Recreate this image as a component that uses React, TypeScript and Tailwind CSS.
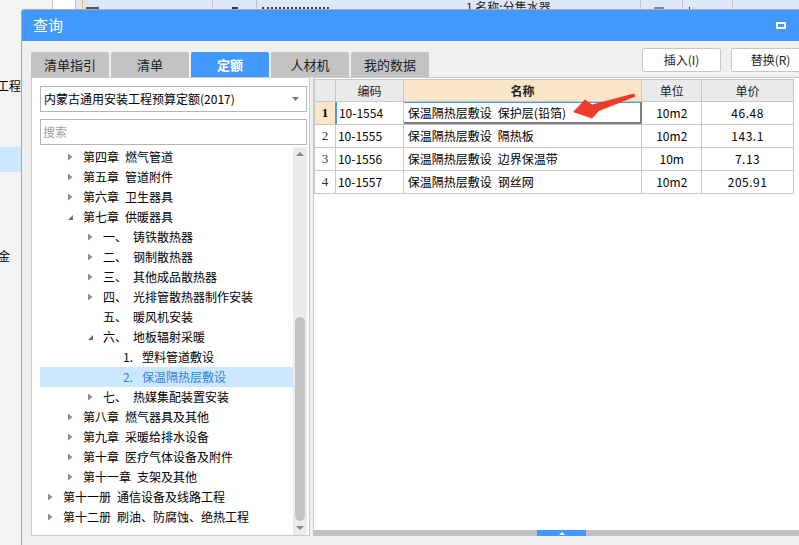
import React from "react";

type Node = { lv: number; a?: "r" | "d"; p: string; t: string; sel?: boolean };

const tree: Node[] = [
  { lv: 2, a: "r", p: "第四章", t: "燃气管道" },
  { lv: 2, a: "r", p: "第五章", t: "管道附件" },
  { lv: 2, a: "r", p: "第六章", t: "卫生器具" },
  { lv: 2, a: "d", p: "第七章", t: "供暖器具" },
  { lv: 3, a: "r", p: "一、", t: "铸铁散热器" },
  { lv: 3, a: "r", p: "二、", t: "钢制散热器" },
  { lv: 3, a: "r", p: "三、", t: "其他成品散热器" },
  { lv: 3, a: "r", p: "四、", t: "光排管散热器制作安装" },
  { lv: 3, p: "五、", t: "暖风机安装" },
  { lv: 3, a: "d", p: "六、", t: "地板辐射采暖" },
  { lv: 4, p: "1.", t: "塑料管道敷设" },
  { lv: 4, p: "2.", t: "保温隔热层敷设", sel: true },
  { lv: 3, a: "r", p: "七、", t: "热媒集配装置安装" },
  { lv: 2, a: "r", p: "第八章", t: "燃气器具及其他" },
  { lv: 2, a: "r", p: "第九章", t: "采暖给排水设备" },
  { lv: 2, a: "r", p: "第十章", t: "医疗气体设备及附件" },
  { lv: 2, a: "r", p: "第十一章", t: "支架及其他" },
  { lv: 1, a: "r", p: "第十一册", t: "通信设备及线路工程" },
  { lv: 1, a: "r", p: "第十二册", t: "刷油、防腐蚀、绝热工程" },
];

const rows = [
  ["10-1554", "保温隔热层敷设", "保护层(铅箔)", "10m2", "46.48"],
  ["10-1555", "保温隔热层敷设", "隔热板", "10m2", "143.1"],
  ["10-1556", "保温隔热层敷设", "边界保温带", "10m", "7.13"],
  ["10-1557", "保温隔热层敷设", "钢丝网", "10m2", "205.91"],
];

const tabs = ["清单指引", "清单", "定额", "人材机", "我的数据"];

function Arrow({ kind }: { kind?: "r" | "d" }) {
  if (kind === "r")
    return (
      <svg width="15" height="20" viewBox="0 0 15 20">
        <polygon points="0,6.5 4.5,10 0,13.5" fill="#8c8c8c" />
      </svg>
    );
  if (kind === "d")
    return (
      <svg width="15" height="20" viewBox="0 0 15 20">
        <polygon points="0,13 5,8 5,13" fill="#6e6e6e" />
      </svg>
    );
  return <span className="w-[15px]" />;
}

export default function App() {
  return (
    <div className="w-[799px] h-[545px] overflow-hidden bg-[#f3f3f3] flex font-['Noto_Sans_CJK_SC',sans-serif] text-[12px] text-black">
      {/* left edge of the window behind */}
      <div className="w-[21px] shrink-0 flex flex-col overflow-hidden">
        <div className="h-[78px]" />
        <div className="h-[16px] leading-[16px] whitespace-nowrap flex justify-end">工程</div>
        <div className="h-[53px]" />
        <div className="h-[25px] bg-[#cce8ff]" />
        <div className="h-[75px]" />
        <div className="h-[18px] leading-[18px] whitespace-nowrap flex justify-start -ml-[2px]">金</div>
      </div>

      <div className="flex-1 min-w-0 flex flex-col">
        {/* grid row peeking above the dialog */}
        <div className="h-[9px] flex overflow-hidden shrink-0">
          <div className="w-[31px] shrink-0" />
          <div className="w-[24px] shrink-0 bg-white border-x border-[#c4c4c4]" />
          <div className="w-[137px] shrink-0 bg-[#dde9fb] border-r border-[#c4c4c4] flex">
            <div className="w-[7px] border-r border-[#f2b866]" />
            <div className="ml-[3px] mt-[7px] w-[13px] h-[2px] bg-[#555]" />
          </div>
          <div className="w-[44px] shrink-0 bg-[#dde9fb] border-r border-[#c4c4c4] flex justify-center">
            <div className="mt-[7px] w-[6px] h-[2px] bg-[#333]" />
          </div>
          <div className="w-[384px] shrink-0 bg-[#dde9fb] border-r border-[#c4c4c4] flex">
            <div className="ml-[5px] mt-[7px] w-[67px] h-[2px] border-b-2 border-dotted border-[#444]" />
            <div className="ml-[137px] leading-[12px] pt-[1px] whitespace-nowrap text-[#222]">1 名称:分集水器</div>
          </div>
          <div className="w-[42px] shrink-0 bg-[#dde9fb] border-r border-[#c4c4c4] flex">
            <div className="ml-[13px] mt-[7px] w-[10px] h-[2px] bg-[#888]" />
          </div>
          <div className="w-[50px] shrink-0 bg-[#dde9fb] border-r border-[#c4c4c4] flex">
            <div className="ml-[6px] mt-[7px] w-[1px] h-[2px] bg-[#333]" />
          </div>
          <div className="flex-1 bg-[#dde9fb]" />
        </div>

        {/* dialog */}
        <div className="flex-1 flex flex-col bg-[#f0f0f0] border-l border-t border-[#a9a9a9] rounded-tl-[3px] overflow-hidden">
          <div className="h-[31px] shrink-0 bg-[#4299fd] flex items-center pl-[11px] pr-[13px] text-white text-[15px]">
            <span>查询</span>
            <div className="ml-auto w-[10px] h-[7px] border-2 border-white" />
          </div>

          <div className="h-[36px] shrink-0 flex pl-[9px]">
            <div className="flex items-end gap-[2px]">
              {tabs.map((t) => (
                <div
                  key={t}
                  className={`w-[78px] h-[25px] rounded-t-[2px] flex items-center justify-center text-[13px] ${
                    t === "定额" ? "bg-[#4299fd] text-white font-bold" : "bg-[#c2c2c2] text-[#222]"
                  }`}
                >
                  {t}
                </div>
              ))}
            </div>
            <div className="ml-auto mt-[7px] flex gap-[10px]">
              <button className="w-[79px] h-[24px] bg-white border border-[#c6c6c6] rounded-[2px] text-[12px] text-[#222]">
                插入(I)
              </button>
              <button className="w-[79px] h-[24px] bg-white border border-[#c6c6c6] rounded-[2px] text-[12px] text-[#222] -mr-[11px]">
                替换(R)
              </button>
            </div>
          </div>

          <div className="flex-1 min-h-0 flex gap-[3px] pl-[9px] pb-[9px]">
            {/* left tree panel */}
            <div className="w-[279px] shrink-0 bg-white border border-[#cacaca] flex flex-col pl-[8px] pr-[2px] pt-[8px]">
              <div className="h-[26px] border border-[#b4b4b4] flex items-center pl-[3px] pr-[7px]">
                <span>内蒙古通用安装工程预算定额(2017)</span>
                <svg className="ml-auto" width="7" height="4" viewBox="0 0 7 4">
                  <polygon points="0,0 7,0 3.5,4" fill="#7a7a7a" />
                </svg>
              </div>
              <div className="h-[26px] mt-[7px] border border-[#b4b4b4] flex items-center pl-[2px] text-[#a0a0a0]">
                搜索
              </div>
              <div className="flex-1 min-h-0 mt-[2px] flex">
                <div className="flex-1 flex flex-col overflow-hidden">
                  {tree.map((n, i) => (
                    <div
                      key={i}
                      className={`h-[20px] shrink-0 flex items-center whitespace-nowrap ${
                        n.sel ? "bg-[#cce8ff] text-[#2f83e6]" : ""
                      } ${n.lv === 1 ? "pl-[8px]" : n.lv === 2 ? "pl-[28px]" : n.lv === 3 ? "pl-[48px]" : "pl-[68px]"}`}
                    >
                      <Arrow kind={n.a} />
                      <span
                        className={
                          n.lv === 3 ? "w-[30px] shrink-0" : n.lv === 4 ? "w-[19px] shrink-0" : "mr-[6px]"
                        }
                      >
                        {n.p}
                      </span>
                      <span>{n.t}</span>
                    </div>
                  ))}
                </div>
                <div className="w-[14px] shrink-0 bg-[#ebebeb] flex flex-col items-center pb-[2px]">
                  <svg className="mt-[5px]" width="8" height="4" viewBox="0 0 8 4">
                    <polygon points="0,4 8,4 4,0" fill="#8a8a8a" />
                  </svg>
                  <div className="flex-1" />
                  <div className="w-[10px] h-[204px] rounded-full bg-[#c3c3c3]" />
                  <svg className="mt-[5px] mb-[3px]" width="8" height="4" viewBox="0 0 8 4">
                    <polygon points="0,0 8,0 4,4" fill="#8a8a8a" />
                  </svg>
                </div>
              </div>
            </div>

            {/* right table panel */}
            <div className="flex-1 min-w-0 relative bg-white border-l border-t border-[#cacaca] flex flex-col">
              <div className="flex-1 pt-[1px]">
                <div className="w-[480px] border-l border-[#c8c8c8]">
                  <div className="flex h-[23px] bg-[#eaeaea] border-y border-[#c8c8c8] text-[#222]">
                    <div className="w-[21px] border-r border-[#c8c8c8]" />
                    <div className="w-[68px] border-r border-[#c8c8c8] flex items-center justify-center">编码</div>
                    <div className="w-[239px] border-r border-[#c8c8c8] bg-[#fde6c8] flex items-center justify-center font-bold">
                      名称
                    </div>
                    <div className="w-[60px] border-r border-[#c8c8c8] flex items-center justify-center">单位</div>
                    <div className="w-[92px] border-r border-[#c8c8c8] flex items-center justify-center">单价</div>
                  </div>
                  {rows.map((r, i) => (
                    <div key={r[0]} className="flex h-[23px] border-b border-[#c8c8c8]">
                      <div
                        className={`w-[21px] border-r flex items-center justify-center font-['Liberation_Serif',serif] text-[13px] ${
                          i === 0 ? "bg-[#fde6c8] font-bold border-[#4a9bf0] border-r-2 w-[22px]" : "border-[#c8c8c8] text-[#333]"
                        }`}
                      >
                        {i + 1}
                      </div>
                      <div className={`${i === 0 ? "w-[67px]" : "w-[68px]"} border-r border-[#c8c8c8] flex items-center pl-[2px]`}>
                        {r[0]}
                      </div>
                      <div
                        className={`w-[239px] border-r flex items-center pl-[4px] whitespace-nowrap ${
                          i === 0
                            ? "border-[#7a7a7a] border-r-2 shadow-[inset_0_-2px_0_#7a7a7a,inset_0_1px_0_#4a9bf0]"
                            : "border-[#c8c8c8]"
                        }`}
                      >
                        <span>{r[1]}</span>
                        <span className="ml-[6px]">{r[2]}</span>
                      </div>
                      <div className="w-[60px] border-r border-[#c8c8c8] flex items-center justify-center">{r[3]}</div>
                      <div className="w-[92px] border-r border-[#c8c8c8] flex items-center justify-center tracking-[0.5px]">
                        {r[4]}
                      </div>
                    </div>
                  ))}
                </div>
              </div>
              <div className="h-[6px] shrink-0 bg-[#c0c0c0] flex">
                <div className="ml-[223px] w-[49px] bg-[#4299fd] flex items-center justify-center">
                  <svg width="6" height="3" viewBox="0 0 6 3">
                    <polygon points="0,3 6,3 3,0" fill="#fff" />
                  </svg>
                </div>
              </div>

              {/* red annotation arrow */}
              <svg className="absolute left-[255px] top-[13px]" width="85" height="32" viewBox="0 0 85 32">
                <polygon points="4,21 16,8.5 23,13.5 65,2.5 66.5,5.5 30,20 23,27.5" fill="#f03a2b" />
              </svg>
            </div>
          </div>
        </div>
      </div>
    </div>
  );
}
